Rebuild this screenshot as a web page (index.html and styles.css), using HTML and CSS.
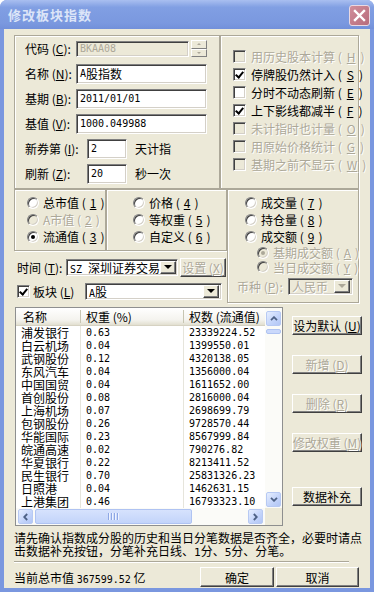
FILE: index.html
```html
<!DOCTYPE html>
<html>
<head>
    <title>修改板块指数</title>
    <link rel="stylesheet" href="styles.css">
</head>
<body>
<div class="window">
    <div class="titlebar">
        <span class="title">修改板块指数</span>
        <span class="close">
            <svg width="13" height="13" viewBox="0 0 13 13"><path d="M2 2 L11 11 M11 2 L2 11" stroke="#fff" stroke-width="2.4" stroke-linecap="square"/></svg>
        </span>
    </div>
    <div class="client">
        <div class="top">
            <div class="group g-base">
                <div class="frow">
                    <span class="lbl">代码 (<u>C</u>):</span>
                    <span class="edit dis w-code"><span class="m">BKAA08</span></span>
                    <span class="spin"><i class="sp-up"></i><i class="sp-dn"></i></span>
                </div>
                <div class="frow">
                    <span class="lbl">名称 (<u>N</u>):</span>
                    <span class="edit w-long"><span class="m">A</span>股指数</span>
                </div>
                <div class="frow">
                    <span class="lbl">基期 (<u>B</u>):</span>
                    <span class="edit w-long"><span class="m">2011/01/01</span></span>
                </div>
                <div class="frow">
                    <span class="lbl">基值 (<u>V</u>):</span>
                    <span class="edit w-long"><span class="m">1000.049988</span></span>
                </div>
                <div class="frow">
                    <span class="lbl lbl-wide">新券第 (<u>I</u>):</span>
                    <span class="edit w-short"><span class="m">2</span></span>
                    <span class="after">天计指</span>
                </div>
                <div class="frow">
                    <span class="lbl lbl-wide">刷新 (<u>Z</u>):</span>
                    <span class="edit w-short"><span class="m">20</span></span>
                    <span class="after">秒一次</span>
                </div>
            </div>
            <div class="group g-opts">
                <div class="crow dis"><span class="chk"></span>用历史股本计算 (<u>H</u>)</div>
                <div class="crow"><span class="chk on"></span>停牌股仍然计入 (<u>S</u>)</div>
                <div class="crow"><span class="chk"></span>分时不动态刷新 (<u>E</u>)</div>
                <div class="crow"><span class="chk on"></span>上下影线都减半 (<u>F</u>)</div>
                <div class="crow dis"><span class="chk"></span>未计指时也计量 (<u>O</u>)</div>
                <div class="crow dis"><span class="chk"></span>用原始价格统计 (<u>G</u>)</div>
                <div class="crow dis"><span class="chk"></span>基期之前不显示 (<u>W</u>)</div>
            </div>
        </div>

        <div class="mid">
            <div class="mid-left">
                <div class="mid-boxes">
                    <div class="group g-r1">
                        <div class="rrow"><span class="radio"></span>总市值 (<u>1</u>)</div>
                        <div class="rrow dis"><span class="radio"></span>A市值 (<u>2</u>)</div>
                        <div class="rrow"><span class="radio on"></span>流通值 (<u>3</u>)</div>
                    </div>
                    <div class="group g-r2">
                        <div class="rrow"><span class="radio"></span>价格 (<u>4</u>)</div>
                        <div class="rrow"><span class="radio"></span>等权重 (<u>5</u>)</div>
                        <div class="rrow"><span class="radio"></span>自定义 (<u>6</u>)</div>
                    </div>
                </div>
                <div class="time-row">
                    <span class="lbl-time">时间 (<u>T</u>):</span>
                    <span class="combo w-time"><span class="combo-text"><span class="m">SZ </span>深圳证券交易</span><span class="drop"></span></span>
                    <span class="btn dis btn-set">设置 (<u>X</u>)</span>
                </div>
                <div class="block-row">
                    <span class="chk on"></span>
                    <span class="lbl-block">板块 (<u>L</u>)</span>
                    <span class="combo w-block"><span class="combo-text"><span class="m">A</span>股</span><span class="drop"></span></span>
                </div>
            </div>
            <div class="group g-r3">
                <div class="rrow"><span class="radio"></span>成交量 (<u>7</u>)</div>
                <div class="rrow"><span class="radio"></span>持仓量 (<u>8</u>)</div>
                <div class="rrow"><span class="radio"></span>成交额 (<u>9</u>)</div>
                <div class="rrow sub dis r-a"><span class="radio on"></span>基期成交额 (<u>A</u>)</div>
                <div class="rrow sub dis r-y"><span class="radio"></span>当日成交额 (<u>Y</u>)</div>
                <div class="cur-row dis">
                    <span class="lbl-cur">币种 (<u>P</u>):</span>
                    <span class="combo combo-dis w-cur"><span class="combo-text">人民币</span><span class="drop"></span></span>
                </div>
            </div>
        </div>

        <div class="list-area">
            <div class="list">
                <div class="lv">
                    <div class="lv-head">
                        <span class="c1">名称</span>
                        <span class="c2">权重 (%)</span>
                        <span class="c3">权数 (流通值)</span>
                    </div>
                    <div class="lv-row"><span class="c1">浦发银行</span><span class="c2 m">0.63</span><span class="c3 m">23339224.52</span></div>
                    <div class="lv-row"><span class="c1">白云机场</span><span class="c2 m">0.04</span><span class="c3 m">1399550.01</span></div>
                    <div class="lv-row"><span class="c1">武钢股份</span><span class="c2 m">0.12</span><span class="c3 m">4320138.05</span></div>
                    <div class="lv-row"><span class="c1">东风汽车</span><span class="c2 m">0.04</span><span class="c3 m">1356000.04</span></div>
                    <div class="lv-row"><span class="c1">中国国贸</span><span class="c2 m">0.04</span><span class="c3 m">1611652.00</span></div>
                    <div class="lv-row"><span class="c1">首创股份</span><span class="c2 m">0.08</span><span class="c3 m">2816000.04</span></div>
                    <div class="lv-row"><span class="c1">上海机场</span><span class="c2 m">0.07</span><span class="c3 m">2698699.79</span></div>
                    <div class="lv-row"><span class="c1">包钢股份</span><span class="c2 m">0.26</span><span class="c3 m">9728570.44</span></div>
                    <div class="lv-row"><span class="c1">华能国际</span><span class="c2 m">0.23</span><span class="c3 m">8567999.84</span></div>
                    <div class="lv-row"><span class="c1">皖通高速</span><span class="c2 m">0.02</span><span class="c3 m">790276.82</span></div>
                    <div class="lv-row"><span class="c1">华夏银行</span><span class="c2 m">0.22</span><span class="c3 m">8213411.52</span></div>
                    <div class="lv-row"><span class="c1">民生银行</span><span class="c2 m">0.70</span><span class="c3 m">25831326.23</span></div>
                    <div class="lv-row"><span class="c1">日照港</span><span class="c2 m">0.04</span><span class="c3 m">1462631.15</span></div>
                    <div class="lv-row"><span class="c1">上港集团</span><span class="c2 m">0.46</span><span class="c3 m">16793323.10</span></div>
                </div>
                <div class="vscroll">
                    <span class="sb-btn"><svg width="8" height="5" viewBox="0 0 8 5"><path d="M1 4.2 L4 1.2 L7 4.2" fill="none" stroke="#4D6185" stroke-width="1.8"/></svg></span>
                    <span class="v-thumb"></span>
                    <span class="sb-fill"></span>
                    <span class="sb-btn"><svg width="8" height="5" viewBox="0 0 8 5"><path d="M1 0.8 L4 3.8 L7 0.8" fill="none" stroke="#4D6185" stroke-width="1.8"/></svg></span>
                </div>
                <div class="hscroll">
                    <span class="sb-btn"><svg width="5" height="8" viewBox="0 0 5 8"><path d="M4.2 1 L1.2 4 L4.2 7" fill="none" stroke="#4D6185" stroke-width="1.8"/></svg></span>
                    <span class="h-thumb"><i></i><i></i><i></i><i></i></span>
                    <span class="sb-fill"></span>
                    <span class="sb-btn"><svg width="5" height="8" viewBox="0 0 5 8"><path d="M0.8 1 L3.8 4 L0.8 7" fill="none" stroke="#4D6185" stroke-width="1.8"/></svg></span>
                </div>
                <div class="corner"></div>
            </div>
            <div class="side-btns">
                <span class="btn">设为默认 (<u>U</u>)</span>
                <span class="btn dis">新增 (<u>D</u>)</span>
                <span class="btn dis">删除 (<u>R</u>)</span>
                <span class="btn dis">修改权重 (<u>M</u>)</span>
                <span class="btn btn-fill">数据补充</span>
            </div>
        </div>

        <p class="note">请先确认指数成分股的历史和当日分笔数据是否齐全，必要时请点<br>击数据补充按钮，分笔补充日线、<span class="m">1</span>分、<span class="m">5</span>分、分笔。</p>
        <div class="sep"></div>
        <div class="bottom">
            <span class="total">当前总市值 <span class="m">367599.52</span> 亿</span>
            <span class="btn btn-ok">确定</span>
            <span class="btn btn-cancel">取消</span>
        </div>
    </div>
</div>
</body>
</html>
```

FILE: styles.css
```css
body {
    margin: 0;
    background: #fff;
    font-family: "Noto Sans CJK SC", sans-serif;
    font-size: 12px;
    color: #000;
}

u {
    text-decoration: underline;
    text-underline-offset: 1px;
}

.m {
    font-family: "DejaVu Sans Mono", "Liberation Mono", monospace;
    font-size: 10px;
}

.dis {
    color: #ACA899;
    text-shadow: 1px 1px 0 #fff;
}

/* window frame */
.window {
    width: 374px;
    height: 592px;
    box-sizing: border-box;
    padding: 0 4px 4px;
    display: flex;
    flex-direction: column;
    background: #7A97DF;
    border-radius: 7px 7px 0 0;
}

.titlebar {
    height: 29px;
    margin: 0 -4px;
    padding: 0 4px 0 8px;
    display: flex;
    align-items: center;
    justify-content: space-between;
    background: linear-gradient(#A9BFF0, #819FE3 25%, #7A98DF 80%, #7290DA);
    border-radius: 7px 7px 0 0;
}

.title {
    color: #DCE5F8;
    font-weight: bold;
    font-size: 13px;
    letter-spacing: 1px;
}

.close {
    width: 21px;
    height: 21px;
    box-sizing: border-box;
    margin-top: 2px;
    border: 1px solid #EAD9E2;
    border-radius: 3px;
    background: linear-gradient(135deg, #D08E9B, #B86C7C);
    display: flex;
    align-items: center;
    justify-content: center;
}

.client {
    flex: 1;
    background: #ECE9D8;
    padding: 6px 0 0 10px;
}

/* group boxes */
.group {
    box-sizing: border-box;
    border: 1px solid #ACA899;
    box-shadow: inset 1px 1px 0 #fff, 1px 1px 0 #fff;
}

.top {
    display: flex;
    height: 154px;
}

.g-base {
    width: 206px;
    padding-left: 10px;
}

.frow {
    display: flex;
    align-items: center;
    height: 25px;
    white-space: nowrap;
}

.lbl {
    width: 51px;
}

.lbl-wide {
    width: 62px;
}

.after {
    margin-left: 8px;
}

/* sunken edit field */
.edit {
    box-sizing: border-box;
    height: 20px;
    padding-left: 3px;
    display: flex;
    align-items: center;
    background: #fff;
    border: 1px solid;
    border-color: #808080 #fff #fff #808080;
    box-shadow: inset 1px 1px 0 #404040, inset -1px -1px 0 #D4D0C8;
    white-space: nowrap;
}

.edit.dis {
    background: #ECE9D8;
    text-shadow: none;
}

.w-code {
    width: 113px;
    height: 16px;
}

.w-long {
    width: 131px;
}

.w-short {
    width: 40px;
}

.spin {
    display: flex;
    flex-direction: column;
    margin-left: 2px;
    width: 16px;
    height: 17px;
}

.spin i {
    flex: 1;
    box-sizing: border-box;
    border: 1px solid;
    border-color: #fff #808080 #808080 #fff;
    background: #ECE9D8;
    position: relative;
}

.spin i::after {
    content: "";
    position: absolute;
    left: 5px;
    top: 2px;
    border-left: 2px solid transparent;
    border-right: 2px solid transparent;
}

.sp-up::after {
    border-bottom: 2px solid #ACA899;
}

.sp-dn::after {
    border-top: 2px solid #ACA899;
}

/* check boxes */
.g-opts {
    width: 139px;
    padding: 11px 0 0 12px;
}

.crow {
    display: flex;
    align-items: center;
    gap: 5px;
    height: 18px;
    white-space: nowrap;
}

.chk {
    width: 13px;
    height: 13px;
    flex: none;
    box-sizing: border-box;
    background: #fff;
    border: 1px solid;
    border-color: #808080 #fff #fff #808080;
    box-shadow: inset 1px 1px 0 #404040, inset -1px -1px 0 #D4D0C8;
    position: relative;
}

.dis .chk {
    background: #ECE9D8;
}

.chk.on::after {
    content: "";
    position: absolute;
    left: 3px;
    top: 1px;
    width: 3px;
    height: 6px;
    border: solid #000;
    border-width: 0 2px 2px 0;
    transform: rotate(40deg);
}

/* radio buttons */
.mid {
    display: flex;
    height: 114px;
}

.mid-left {
    width: 213px;
}

.mid-boxes {
    display: flex;
    height: 62px;
}

.g-r1 {
    width: 92px;
    padding: 4px 0 0 12px;
}

.g-r2 {
    width: 121px;
    padding: 4px 0 0 26px;
}

.g-r3 {
    width: 132px;
    height: 114px;
    padding: 4px 0 0 17px;
}

.rrow {
    display: flex;
    align-items: center;
    gap: 4px;
    height: 17px;
    white-space: nowrap;
}

.rrow.sub {
    margin-left: 12px;
}

.r-a {
    height: 15px;
}

.r-y {
    height: 14px;
}

.radio {
    width: 12px;
    height: 12px;
    flex: none;
    box-sizing: border-box;
    border-radius: 50%;
    background: #fff;
    border: 1px solid;
    border-color: #808080 #fff #fff #808080;
    box-shadow: inset 1px 1px 0 #404040, inset -1px -1px 0 #D4D0C8;
    display: flex;
    align-items: center;
    justify-content: center;
}

.dis .radio {
    background: #ECE9D8;
}

.radio.on::after {
    content: "";
    width: 4px;
    height: 4px;
    border-radius: 50%;
    background: #000;
}

.dis .radio.on::after {
    background: #ACA899;
}

.time-row {
    display: flex;
    align-items: center;
    height: 19px;
    margin-top: 7px;
    padding-left: 3px;
    white-space: nowrap;
}

.lbl-time {
    width: 49px;
}

.block-row {
    display: flex;
    align-items: center;
    height: 17px;
    margin-top: 6px;
    padding-left: 3px;
    white-space: nowrap;
}

.lbl-block {
    width: 52px;
    margin-left: 3px;
}

.cur-row {
    display: flex;
    align-items: center;
    height: 17px;
    margin: 4px 0 0 -8px;
    white-space: nowrap;
}

.lbl-cur {
    width: 51px;
}

/* combo boxes */
.combo {
    box-sizing: border-box;
    height: 17px;
    display: flex;
    align-items: center;
    background: #fff;
    border: 1px solid;
    border-color: #808080 #fff #fff #808080;
    box-shadow: inset 1px 1px 0 #404040, inset -1px -1px 0 #D4D0C8;
    padding: 2px;
}

.combo-dis {
    background: #ECE9D8;
}

.combo-text {
    flex: 1;
    padding-left: 1px;
    white-space: nowrap;
}

.drop {
    width: 16px;
    height: 13px;
    flex: none;
    box-sizing: border-box;
    background: #ECE9D8;
    border: 1px solid;
    border-color: #fff #404040 #404040 #fff;
    box-shadow: inset -1px -1px 0 #808080;
    display: flex;
    align-items: center;
    justify-content: center;
}

.drop::after {
    content: "";
    border-left: 4px solid transparent;
    border-right: 4px solid transparent;
    border-top: 4px solid #000;
    margin-bottom: 1px;
}

.combo-dis .drop::after {
    border-top-color: #ACA899;
}

.w-time {
    width: 112px;
    margin-right: 2px;
}

.w-block {
    width: 137px;
}

.w-cur {
    width: 65px;
}

/* push buttons */
.btn {
    box-sizing: border-box;
    height: 19px;
    display: flex;
    align-items: center;
    justify-content: center;
    background: #ECE9D8;
    border: 1px solid;
    border-color: #fff #404040 #404040 #fff;
    box-shadow: inset -1px -1px 0 #808080;
    white-space: nowrap;
}

.btn-set {
    width: 46px;
}

/* list view */
.list-area {
    display: flex;
    margin-top: 4px;
}

.list {
    margin-left: 1px;
    width: 268px;
    height: 219px;
    box-sizing: border-box;
    border: 1px solid #8E8F8F;
    display: grid;
    grid-template-columns: 249px 17px;
    grid-template-rows: 200px 17px;
    background: #fff;
}

.lv {
    overflow: hidden;
}

.lv-head {
    display: flex;
    height: 18px;
    box-sizing: border-box;
    align-items: center;
    background: linear-gradient(#FFFFFF, #F4F3EE 70%, #E2DFD0);
    border-bottom: 1px solid #D6D2C2;
    white-space: nowrap;
}

.lv-head span {
    box-sizing: border-box;
    flex: none;
    height: 13px;
    line-height: 13px;
    border-right: 1px solid #C7C5B2;
}

.lv-head .c1 {
    padding-left: 7px;
}

.lv-row {
    display: flex;
    height: 13px;
    line-height: 13px;
    white-space: nowrap;
}

.lv-row span {
    box-sizing: border-box;
    flex: none;
    height: 13px;
    border-right: 1px solid #E6E5DC;
}

.c1 {
    width: 65px;
    padding-left: 5px;
}

.c2 {
    width: 103px;
    padding-left: 5px;
}

.c3 {
    width: 120px;
    padding-left: 5px;
}

.lv-row .m {
    font-size: 10px;
}

/* scroll bars */
.vscroll {
    display: flex;
    flex-direction: column;
    padding: 3px 1px 1px 1px;
    background: #FBFBF8;
}

.hscroll {
    display: flex;
    padding: 1px 2px 1px 2px;
    background: #FBFBF8;
}

.sb-btn {
    width: 15px;
    height: 15px;
    flex: none;
    box-sizing: border-box;
    border: 1px solid #B7C9F3;
    border-radius: 2px;
    background: linear-gradient(135deg, #E6EEFF, #C2D3FA 60%, #B2C6F5);
    display: flex;
    align-items: center;
    justify-content: center;
}

.sb-fill {
    flex: 1;
}

.v-thumb {
    height: 5px;
    margin-top: 3px;
    box-sizing: border-box;
    border: 1px solid #AFC3F2;
    border-radius: 2px;
    background: #CAD8FB;
}

.h-thumb {
    width: 157px;
    margin-left: 2px;
    box-sizing: border-box;
    border: 1px solid #AFC3F2;
    border-radius: 2px;
    background: linear-gradient(#D6E2FD, #C3D4FA);
    display: flex;
    align-items: center;
    justify-content: center;
    gap: 1px;
}

.h-thumb i {
    width: 1px;
    height: 7px;
    background: #8EA7E4;
    box-shadow: 1px 0 0 #EEF3FF;
    margin-right: 1px;
}

.corner {
    background: #ECE9D8;
}

.side-btns {
    display: flex;
    flex-direction: column;
    margin-left: 9px;
    padding-top: 9px;
}

.side-btns .btn {
    width: 70px;
    margin-bottom: 20px;
}

.side-btns .btn-fill {
    margin-top: 15px;
}

/* footer */
.note {
    margin: 5px 0 0;
    line-height: 13px;
    white-space: nowrap;
}

.note .m {
    font-size: 11px;
}

.sep {
    width: 335px;
    height: 1px;
    margin-top: 2px;
    background: #ACA899;
    border-bottom: 1px solid #fff;
}

.bottom {
    width: 345px;
    height: 20px;
    margin-top: 4px;
    display: flex;
    align-items: center;
}

.total {
    flex: 1;
    white-space: nowrap;
}

.bottom .btn {
    height: 20px;
}

.btn-ok {
    width: 74px;
    margin-right: 2px;
}

.btn-cancel {
    width: 83px;
}
```
